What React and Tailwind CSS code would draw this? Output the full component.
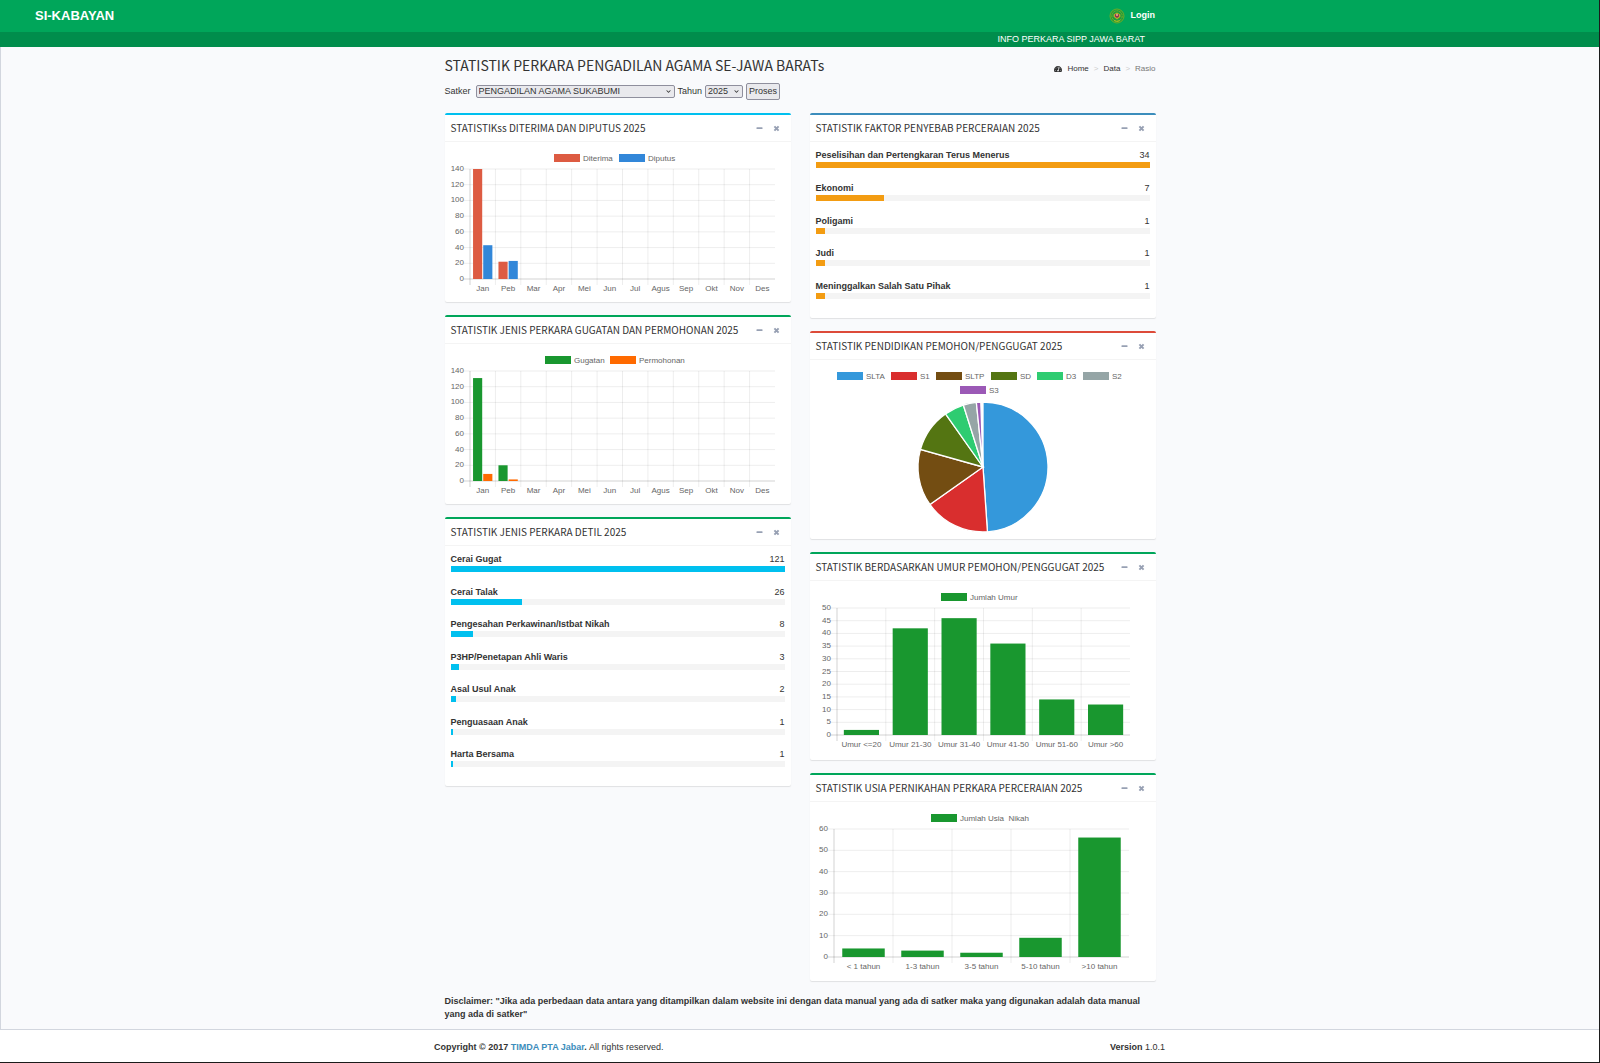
import { FaChevronDown, FaTachometerAlt } from "react-icons/fa";

const MONTHS = ["Jan", "Peb", "Mar", "Apr", "Mei", "Jun", "Jul", "Agus", "Sep", "Okt", "Nov", "Des"];

const MONTH_PLOT = { width: 346, height: 160, left: 25, right: 330, top: 27, bottom: 137 };

const FAKTOR = [
  { label: "Peselisihan dan Pertengkaran Terus Menerus", value: 34 },
  { label: "Ekonomi", value: 7 },
  { label: "Poligami", value: 1 },
  { label: "Judi", value: 1 },
  { label: "Meninggalkan Salah Satu Pihak", value: 1 },
];

const DETIL = [
  { label: "Cerai Gugat", value: 121 },
  { label: "Cerai Talak", value: 26 },
  { label: "Pengesahan Perkawinan/Istbat Nikah", value: 8 },
  { label: "P3HP/Penetapan Ahli Waris", value: 3 },
  { label: "Asal Usul Anak", value: 2 },
  { label: "Penguasaan Anak", value: 1 },
  { label: "Harta Bersama", value: 1 },
];

const PENDIDIKAN = [
  { label: "SLTA", value: 90, color: "#3498db", x: 27, y: 12 },
  { label: "S1", value: 30, color: "#d92e2e", x: 81, y: 12 },
  { label: "SLTP", value: 26, color: "#734d12", x: 126, y: 12 },
  { label: "SD", value: 20, color: "#547512", x: 181, y: 12 },
  { label: "D3", value: 9, color: "#2ecc71", x: 227, y: 12 },
  { label: "S2", value: 6, color: "#95a5a6", x: 273, y: 12 },
  { label: "S3", value: 2, color: "#9b59b6", x: 150, y: 26 },
];

// cases without education data, drawn as an empty slice
const PENDIDIKAN_KOSONG = 1;

function LegendItem({ x, y, color, label }) {
  return (
    <g>
      <rect x={x} y={y} width="26" height="8" fill={color} />
      <text x={x + 29} y={y + 7} fill="#666" className="text-[8px] whitespace-pre">
        {label}
      </text>
    </g>
  );
}

function BarChart({ title, plot, labels, series, max, step }) {
  const { width, height, left, right, top, bottom } = plot;
  const slot = (right - left) / labels.length;
  const barSlot = (slot * 0.8) / series.length;
  const toY = (v) => bottom - ((bottom - top) * v) / max;
  const ticks = [];
  for (let v = 0; v <= max; v += step) ticks.push(v);

  return (
    <svg viewBox={`0 0 ${width} ${height}`} className="block w-full h-auto" role="img" aria-label={title}>
      {ticks.map((v) => (
        <g key={v}>
          <line
            x1={left - 6}
            x2={right}
            y1={toY(v)}
            y2={toY(v)}
            stroke="#000"
            strokeOpacity={v === 0 ? 0.25 : 0.1}
            strokeWidth="0.7"
          />
          <text x={left - 6} y={toY(v) + 2} textAnchor="end" fill="#666" className="text-[8px]">
            {v}
          </text>
        </g>
      ))}
      {labels.map((label, i) => (
        <g key={label}>
          <line
            x1={left + slot * i}
            x2={left + slot * i}
            y1={top}
            y2={bottom + 6}
            stroke="#000"
            strokeOpacity={i === 0 ? 0.25 : 0.1}
            strokeWidth="0.7"
          />
          <text x={left + slot * (i + 0.5)} y={bottom + 12} textAnchor="middle" fill="#666" className="text-[8px]">
            {label}
          </text>
        </g>
      ))}
      {series.map((s, si) => (
        <g key={s.label}>
          <LegendItem x={s.x} y={top - 15} color={s.color} label={s.label} />
          {s.data.map((v, i) => (
            <rect
              key={i}
              x={left + slot * (i + 0.1) + barSlot * (si + 0.05)}
              y={toY(v)}
              width={barSlot * 0.9}
              height={bottom - toY(v)}
              fill={s.color}
            />
          ))}
        </g>
      ))}
    </svg>
  );
}

function PieChart({ title, data, empty }) {
  const cx = 173;
  const cy = 107;
  const r = 65;
  const total = data.reduce((sum, d) => sum + d.value, empty);
  const point = (v) => {
    const a = (v / total) * Math.PI * 2;
    return `${cx + r * Math.sin(a)} ${cy - r * Math.cos(a)}`;
  };
  let sum = 0;

  return (
    <svg viewBox="0 0 346 179" className="block w-full h-auto" role="img" aria-label={title}>
      {data.map((d) => {
        const from = sum;
        sum += d.value;
        return (
          <g key={d.label}>
            <LegendItem x={d.x} y={d.y} color={d.color} label={d.label} />
            <path
              d={`M${cx} ${cy} L${point(from)} A${r} ${r} 0 0 1 ${point(sum)} Z`}
              fill={d.color}
              stroke="#fff"
              strokeWidth="1.3"
            />
          </g>
        );
      })}
    </svg>
  );
}

function ProgressList({ items, barClass, className }) {
  const max = Math.max(...items.map((item) => item.value));

  return (
    <ul className={`flex flex-col justify-between px-[6px] mt-[7px] mb-[19px] ${className}`}>
      {items.map((item) => (
        <li key={item.label}>
          <div className="flex justify-between leading-[13px]">
            <span className="font-bold">{item.label}</span>
            <span>{item.value}</span>
          </div>
          <div className="h-[6px] bg-[#f4f4f4]">
            <div className={`h-full ${barClass}`} style={{ width: `${(item.value / max) * 100}%` }} />
          </div>
        </li>
      ))}
    </ul>
  );
}

function Box({ title, borderClass, children }) {
  return (
    <section className={`bg-white rounded-xs border-t-2 shadow-[0_1px_1px_rgba(0,0,0,0.1)] ${borderClass}`}>
      <div className="flex items-center justify-between pl-[6px] pr-[11px] border-b border-[#f4f4f4]">
        <h2 className="font-['Noto_Sans_CJK_SC',sans-serif] text-[10px] leading-[26px] whitespace-nowrap text-[#333]">{title}</h2>
        <div className="flex items-center gap-[10px] text-[#97a0b3]">
          <button type="button" aria-label="Collapse">
            <svg viewBox="0 0 7 7" className="block size-[7px]">
              <rect x="0.5" y="2.3" width="6" height="1.8" rx="0.4" fill="currentColor" />
            </svg>
          </button>
          <button type="button" aria-label="Remove">
            <svg viewBox="0 0 7 7" className="block size-[7px]">
              <path d="M1.4 1.4 5.6 5.6M5.6 1.4 1.4 5.6" stroke="currentColor" strokeWidth="2" />
            </svg>
          </button>
        </div>
      </div>
      {children}
    </section>
  );
}

function Select({ id, className, children }) {
  return (
    <div className={`relative ${className}`}>
      <select
        id={id}
        className="block w-full h-[13px] pl-[2px] leading-[11px] appearance-none bg-[#e9e9ed] border border-[#8f8f9d] rounded-xs"
      >
        {children}
      </select>
      <FaChevronDown className="absolute right-1 top-1 size-[5px] pointer-events-none" />
    </div>
  );
}

function Emblem() {
  return (
    <svg viewBox="0 0 16 16" className="size-4" aria-hidden="true">
      <circle cx="8" cy="8" r="7" fill="#1f9c3c" stroke="#7fae1f" strokeWidth="0.8" />
      <circle cx="8" cy="8" r="5.2" fill="none" stroke="#9fb01c" strokeWidth="0.7" strokeDasharray="2.2 0.7" />
      <path d="M4.6 6.4 8 4.4l3.4 2v2.4L8 11.4 4.6 8.8Z" fill="#b9a82c" />
      <path d="M6 6.2h4v2.2L8 10 6 8.4Z" fill="#8d2f52" />
      <circle cx="8" cy="7" r="0.9" fill="#e8c9a0" />
      <path d="M5 12.6q3 1.6 6 0" fill="none" stroke="#c7c31d" strokeWidth="0.8" />
    </svg>
  );
}

export default function App() {
  return (
    <div className="min-h-screen flex flex-col bg-[#f9fafc] border-r border-b border-[#1b1b1b] font-['Liberation_Sans',Arial,sans-serif] text-[9px] text-[#333]">
      <header className="text-white">
        <div className="grid grid-cols-[1fr_minmax(0,731px)_1fr] items-center h-8 bg-[#00a65a]">
          <a href="#" className="pl-[35px] text-[13px] leading-4 font-bold">SI-KABAYAN</a>
          <a href="#login" className="flex items-center justify-end gap-[6px] pr-[10px] font-bold">
            <Emblem />
            Login
          </a>
        </div>
        <div className="bg-[#008d4c]">
          <p className="max-w-[731px] mx-auto pr-5 text-right leading-[15px]">INFO PERKARA SIPP JAWA BARAT</p>
        </div>
      </header>

      <main className="grow border-l border-[#d2d6de]">
        <div className="max-w-[731px] mx-auto px-[10px]">
          <div className="flex items-center justify-between pt-[7px]">
            <h1 className="font-['Noto_Sans_CJK_SC',sans-serif] text-[14px] leading-[22px]">
              STATISTIK PERKARA PENGADILAN AGAMA SE-JAWA BARATs
            </h1>
            <nav aria-label="Breadcrumb" className="flex items-center gap-[5px] pt-2 text-[8px]">
              <a href="#home" className="flex items-center gap-[5px] text-[#333]">
                <FaTachometerAlt className="size-[8px]" />
                Home
              </a>
              <span className="text-[#ccc]">&gt;</span>
              <a href="#data" className="text-[#333]">Data</a>
              <span className="text-[#ccc]">&gt;</span>
              <span className="text-[#777]">Rasio</span>
            </nav>
          </div>

          <form className="flex items-center gap-[3px] mt-[7px]" onSubmit={(e) => e.preventDefault()}>
            <label htmlFor="satker" className="pr-[2px]">Satker</label>
            <Select id="satker" className="w-[199px]">
              <option>PENGADILAN AGAMA SUKABUMI</option>
            </Select>
            <label htmlFor="tahun">Tahun</label>
            <Select id="tahun" className="w-[38px]">
              <option>2025</option>
            </Select>
            <button type="submit" className="px-[2px] leading-[15px] bg-[#e9e9ed] border border-[#8f8f9d] rounded-xs">
              Proses
            </button>
          </form>

          <div className="grid grid-cols-2 items-start gap-[19px] mt-[13px]">
            <div className="flex flex-col gap-[13px]">
              <Box title="STATISTIKss DITERIMA DAN DIPUTUS 2025" borderClass="border-[#00c0ef]">
                <BarChart
                  title="Diterima dan diputus"
                  plot={MONTH_PLOT}
                  labels={MONTHS}
                  max={140}
                  step={20}
                  series={[
                    { label: "Diterima", color: "#dd5b42", x: 109, data: [140, 22] },
                    { label: "Diputus", color: "#3287d9", x: 174, data: [43, 23] },
                  ]}
                />
              </Box>
              <Box title="STATISTIK JENIS PERKARA GUGATAN DAN PERMOHONAN 2025" borderClass="border-[#00a65a]">
                <BarChart
                  title="Gugatan dan permohonan"
                  plot={MONTH_PLOT}
                  labels={MONTHS}
                  max={140}
                  step={20}
                  series={[
                    { label: "Gugatan", color: "#19972f", x: 100, data: [131, 20] },
                    { label: "Permohonan", color: "#ff6a00", x: 165, data: [9, 2] },
                  ]}
                />
              </Box>
              <Box title="STATISTIK JENIS PERKARA DETIL 2025" borderClass="border-[#00a65a]">
                <ProgressList items={DETIL} barClass="bg-[#00c0ef]" className="min-h-[214px]" />
              </Box>
            </div>

            <div className="flex flex-col gap-[13px]">
              <Box title="STATISTIK FAKTOR PENYEBAB PERCERAIAN 2025" borderClass="border-[#3c8dbc]">
                <ProgressList items={FAKTOR} barClass="bg-[#f39c12]" className="min-h-[150px]" />
              </Box>
              <Box title="STATISTIK PENDIDIKAN PEMOHON/PENGGUGAT 2025" borderClass="border-[#dd4b39]">
                <PieChart title="Pendidikan" data={PENDIDIKAN} empty={PENDIDIKAN_KOSONG} />
              </Box>
              <Box title="STATISTIK BERDASARKAN UMUR PEMOHON/PENGGUGAT 2025" borderClass="border-[#00a65a]">
                <BarChart
                  title="Jumlah umur"
                  plot={{ width: 346, height: 179, left: 27, right: 320, top: 27, bottom: 154 }}
                  labels={["Umur <=20", "Umur 21-30", "Umur 31-40", "Umur 41-50", "Umur 51-60", "Umur >60"]}
                  max={50}
                  step={5}
                  series={[{ label: "Jumlah Umur", color: "#19972f", x: 131, data: [2, 42, 46, 36, 14, 12] }]}
                />
              </Box>
              <Box title="STATISTIK USIA PERNIKAHAN PERKARA PERCERAIAN 2025" borderClass="border-[#00a65a]">
                <BarChart
                  title="Jumlah usia nikah"
                  plot={{ width: 346, height: 179, left: 24, right: 319, top: 27, bottom: 155 }}
                  labels={["< 1 tahun", "1-3 tahun", "3-5 tahun", "5-10 tahun", ">10 tahun"]}
                  max={60}
                  step={10}
                  series={[{ label: "Jumlah Usia  Nikah", color: "#19972f", x: 121, data: [4, 3, 2, 9, 56] }]}
                />
              </Box>
            </div>
          </div>

          <p className="mt-[14px] mb-[7px] leading-[13px] font-bold">
            Disclaimer: "Jika ada perbedaan data antara yang ditampilkan dalam website ini dengan data manual yang ada di
            satker maka yang digunakan adalah data manual yang ada di satker"
          </p>
        </div>
      </main>

      <footer className="bg-white border-t border-[#d2d6de]">
        <div className="flex justify-between max-w-[731px] mx-auto pt-[11px] pb-2 leading-[13px]">
          <p>
            <b>
              Copyright © 2017 <a href="#timda" className="text-[#3c8dbc]">TIMDA PTA Jabar</a>.
            </b>{" "}
            All rights reserved.
          </p>
          <p>
            <b>Version</b> 1.0.1
          </p>
        </div>
      </footer>
    </div>
  );
}
